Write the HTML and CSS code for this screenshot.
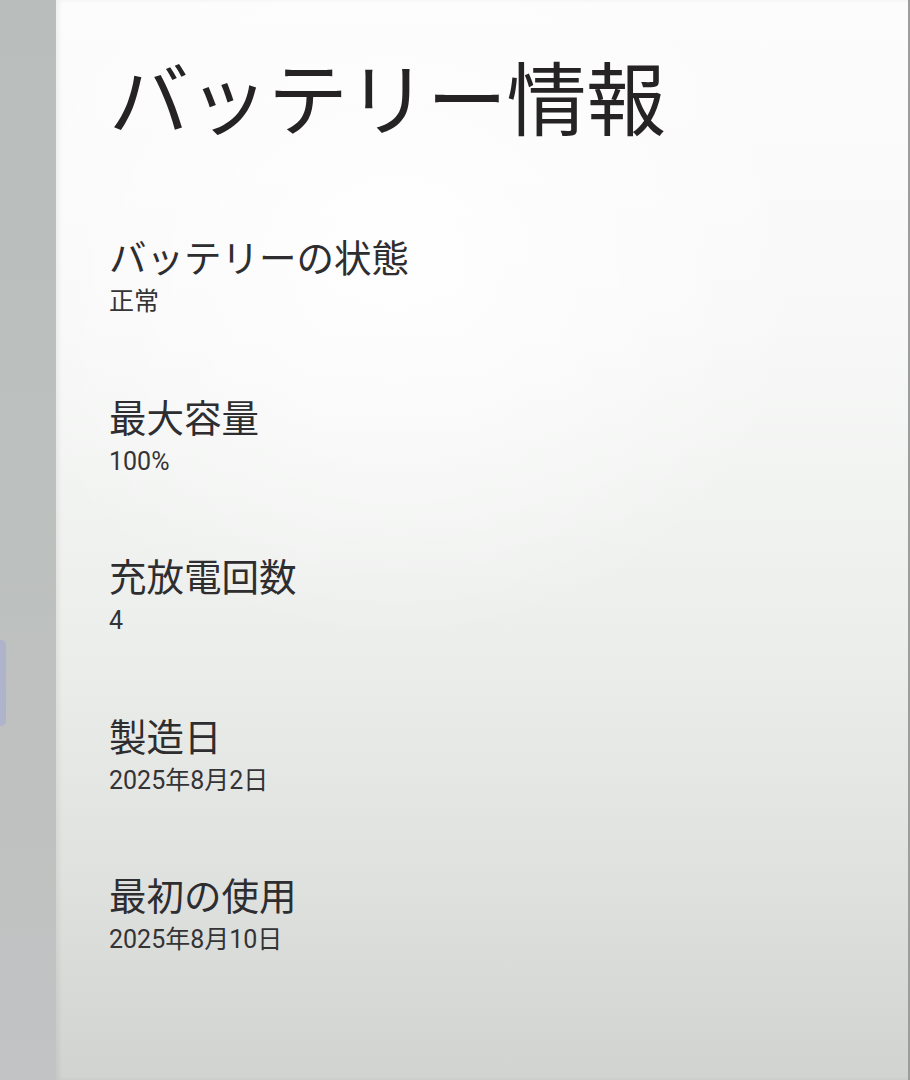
FILE: index.html
```html
<!DOCTYPE html>
<html lang="ja">
<head>
<meta charset="utf-8">
<title>バッテリー情報</title>
<link rel="stylesheet" href="styles.css">
</head>
<body>
<div class="screen">
  <aside class="side">
    <div class="side-tab"></div>
  </aside>
  <main class="panel">
    <h1 class="title">バッテリー情報</h1>
    <section class="item">
      <div class="label">バッテリーの状態</div>
      <div class="value">正常</div>
    </section>
    <section class="item">
      <div class="label">最大容量</div>
      <div class="value">100%</div>
    </section>
    <section class="item">
      <div class="label">充放電回数</div>
      <div class="value">4</div>
    </section>
    <section class="item">
      <div class="label">製造日</div>
      <div class="value">2025年8月2日</div>
    </section>
    <section class="item">
      <div class="label">最初の使用</div>
      <div class="value">2025年8月10日</div>
    </section>
  </main>
</div>
</body>
</html>
```

FILE: styles.css
```css
html, body {
  margin: 0;
  padding: 0;
  height: 100%;
}
body {
  font-family: Roboto, "Noto Sans CJK JP", "Noto Sans", sans-serif;
  background: #bcbfbe;
}
.screen {
  display: flex;
  height: 1080px;
  overflow: hidden;
}
.side {
  width: 56px;
  flex: none;
  position: relative;
  background: linear-gradient(180deg, #b9bdbc 0%, #bcc0be 50%, #c2c3c4 100%);
}
.side-tab {
  position: absolute;
  left: 0;
  top: 640px;
  width: 6px;
  height: 86px;
  border-radius: 0 5px 5px 0;
  background: #b0b3cc;
}
.panel {
  flex: 1;
  padding: 62px 0 0 53px;
  border-right: 2px solid #9c9d9d;
  background:
    radial-gradient(ellipse 420px 380px at 340px 260px, rgba(255,255,255,0.9), rgba(255,255,255,0) 100%),
    linear-gradient(180deg, #fbfcfb 0%, #f7f8f7 30%, #eceeec 60%, #dfe1df 82%, #d1d3d1 100%);
  box-shadow: inset 3px 0 4px rgba(0,0,0,0.06);
}
.title {
  margin: 0 0 95px;
  font-size: 80px;
  line-height: 1;
  font-weight: 400;
  color: #262325;
  letter-spacing: -0.5px;
}
.item {
  margin-bottom: 78.5px;
}
.label {
  font-size: 37.5px;
  line-height: 44px;
  color: #2e2d2f;
  font-weight: 400;
}
.value {
  margin-top: 5px;
  font-size: 25px;
  line-height: 32px;
  color: #343335;
}
```
